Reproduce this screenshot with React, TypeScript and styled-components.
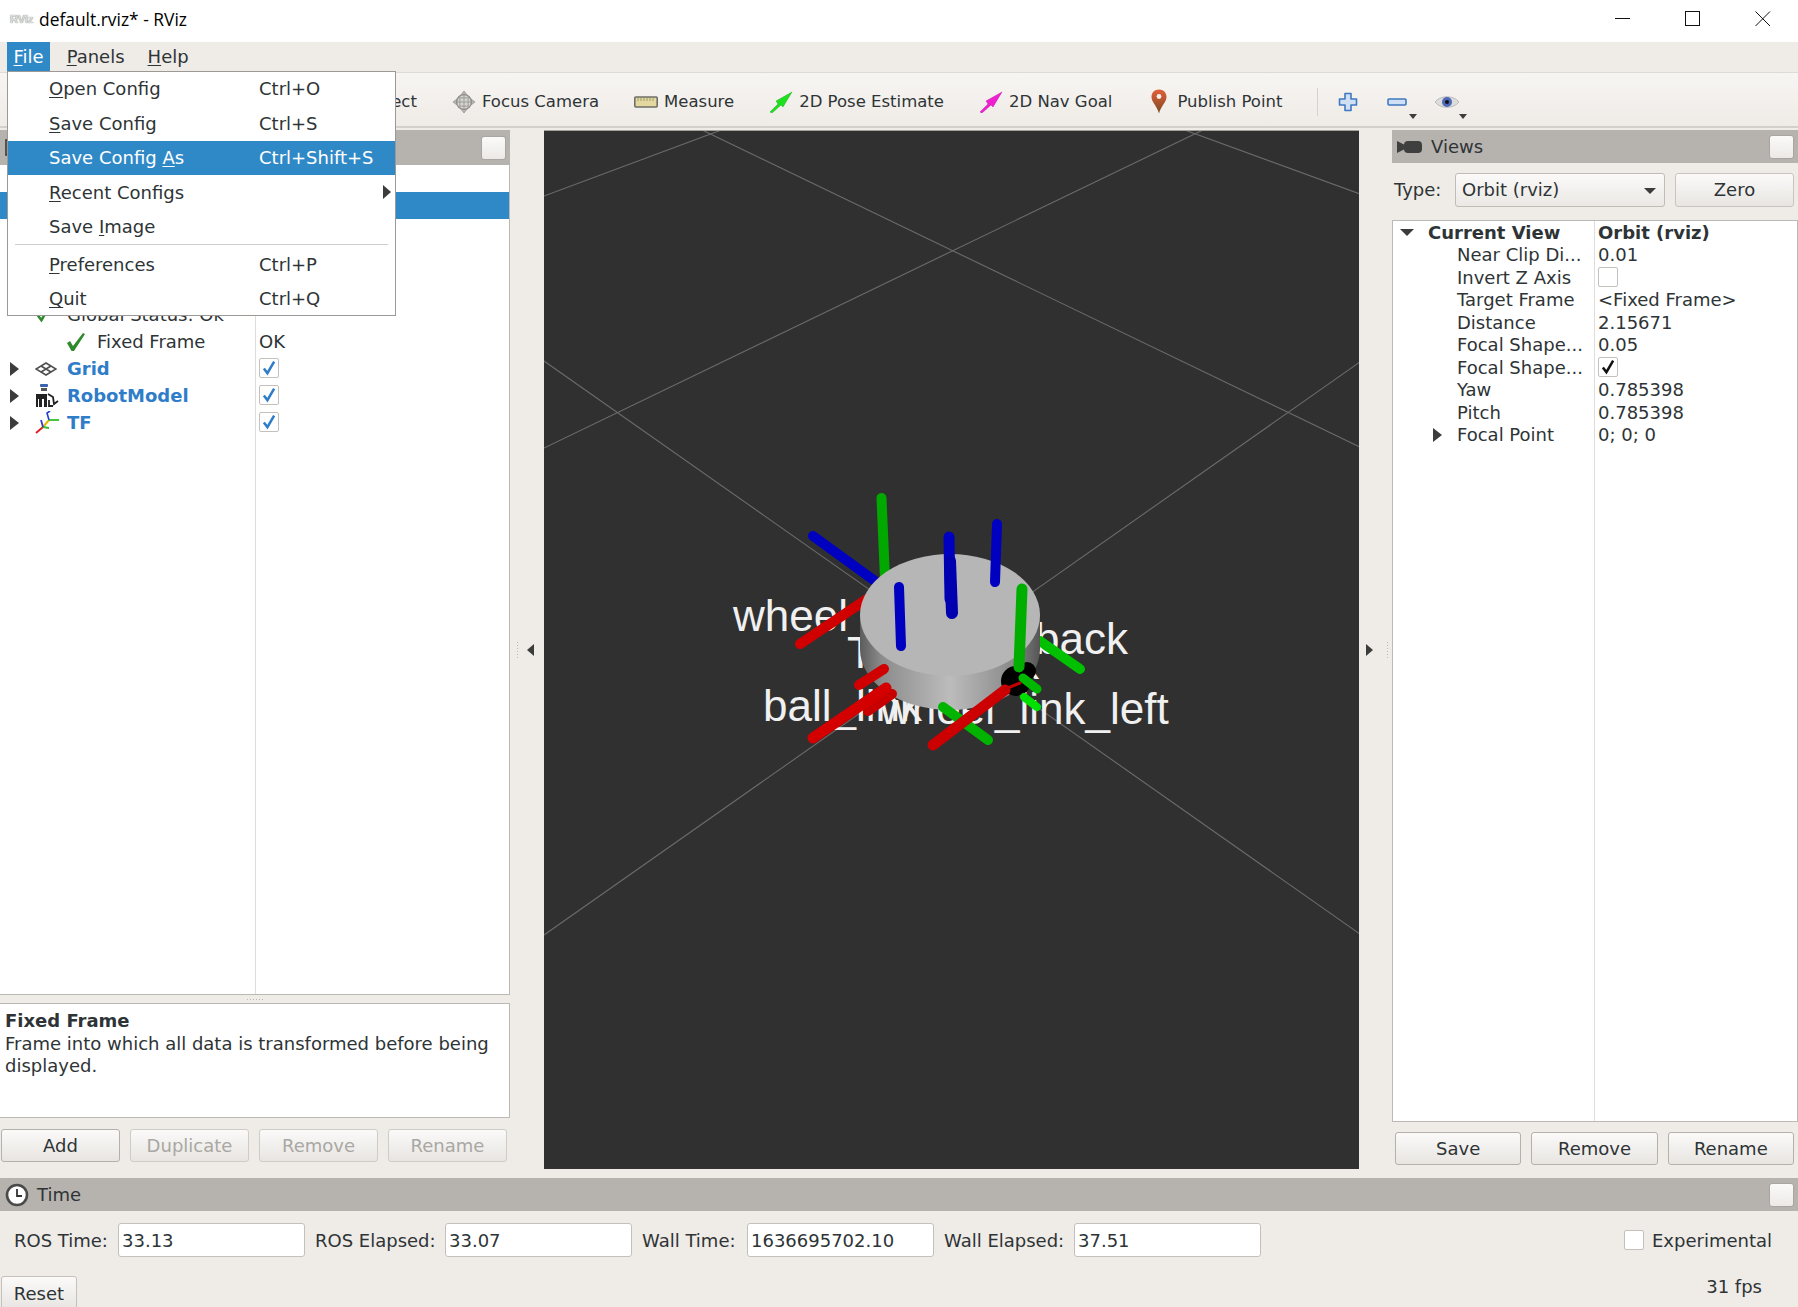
import * as React from 'react';
import styled, { createGlobalStyle } from 'styled-components';

const GlobalStyle = createGlobalStyle`
  html, body {
    margin: 0;
    padding: 0;
    background: #efebe7;
    overflow: hidden;
  }
  * { box-sizing: border-box; }
  u { text-underline-offset: 2px; }
`;

const Layout = styled.div`
  position: relative;
  width: 1798px;
  height: 1307px;
  display: flex;
  flex-direction: column;
  overflow: hidden;
  background: #efebe7;
  color: #2e3436;
  font-family: "DejaVu Sans", "Liberation Sans", sans-serif;
  font-size: 18px;
`;

/* window chrome */
const TitleBar = styled.div`
  height: 42px;
  background: #fff;
  display: flex;
  align-items: center;
  padding: 0 0 4px 10px;
  flex-shrink: 0;
`;

const AppLogo = styled.span`
  width: 29px;
  font: bold 11.5px "Liberation Sans", sans-serif;
  letter-spacing: -0.3px;
  color: #dcdcdc;
  text-shadow: 0 0 1px #666;
`;

const TitleText = styled.span`
  font-family: "Open Sans", sans-serif;
  font-size: 17.4px;
  color: #000;
`;

const WindowButtons = styled.div`
  margin-left: auto;
  display: flex;
  align-items: center;
  gap: 54px;
  padding: 0 27px 0 0;
`;

const MenuBar = styled.div`
  height: 30px;
  flex-shrink: 0;
  display: flex;
  gap: 10px;
  padding-left: 7px;
  background: #efebe7;
`;

const MenuItem = styled.div<{ $open?: boolean }>`
  height: 30px;
  line-height: 30px;
  padding: 0 6.5px;
  background: ${(p) => (p.$open ? '#3089c7' : 'transparent')};
  color: ${(p) => (p.$open ? '#fff' : '#2e3436')};
`;

/* the tools left of Select lie under the open menu, so only their room is kept */
const Toolbar = styled.div`
  height: 56px;
  flex-shrink: 0;
  display: flex;
  align-items: center;
  gap: 35px;
  padding: 4px 0 0 336px;
  font-size: 16.5px;
  background: linear-gradient(#f7f5f2, #efebe7);
  border-top: 1px solid #dedad6;
  border-bottom: 2px solid #d3cfca;
`;

const Tool = styled.div`
  display: flex;
  align-items: center;
  gap: 6px;
`;

const ToolIcon = styled.span`
  width: 24px;
  height: 26px;
  display: flex;
  align-items: center;
  justify-content: center;
`;

const ToolSeparator = styled.div`
  width: 1px;
  height: 28px;
  background: #d6d2cd;
`;

const ViewTools = styled.div`
  display: flex;
  align-items: center;
  margin-left: -15px;
`;

const ViewTool = styled.div<{ $w: number }>`
  position: relative;
  width: ${(p) => p.$w}px;
  height: 26px;
  display: flex;
  align-items: center;
`;

const Caret = styled.span<{ $right: number }>`
  position: absolute;
  right: ${(p) => p.$right}px;
  bottom: -4px;
  width: 0;
  height: 0;
  border-left: 4px solid transparent;
  border-right: 4px solid transparent;
  border-top: 5px solid #3c3c3c;
`;

/* main part */
const Main = styled.div`
  flex: 1;
  min-height: 0;
  display: flex;
`;

const LeftDock = styled.div`
  width: 510px;
  flex-shrink: 0;
  display: flex;
  flex-direction: column;
  padding: 2px 0 16px;
`;

const RightDock = styled.div`
  flex: 1;
  min-width: 0;
  display: flex;
  flex-direction: column;
  padding: 2px 0 13px;
`;

const PanelHeader = styled.div<{ $h?: number }>`
  height: ${(p) => p.$h ?? 33}px;
  flex-shrink: 0;
  background: #b6b2ae;
  display: flex;
  align-items: center;
  gap: 8px;
  padding: 0 4px 0 5px;
  color: #2e3436;
`;

const FloatButton = styled.div`
  margin-left: auto;
  width: 25px;
  height: 24px;
  border-radius: 3px;
  border: 1px solid #a9a5a1;
  background: linear-gradient(#fbfaf9, #ece9e6);
`;

const TreeFrame = styled.div<{ $top?: number }>`
  flex: 1;
  min-height: 0;
  margin-top: ${(p) => p.$top ?? 0}px;
  position: relative;
  background: #fff;
  border: 1px solid #bcb8b4;
  border-top-width: ${(p) => (p.$top ? 1 : 0)}px;
  border-left-width: ${(p) => (p.$top ? 1 : 0)}px;
  overflow: hidden;
`;

const ColumnLine = styled.div<{ $x: number }>`
  position: absolute;
  top: 0;
  bottom: 0;
  left: ${(p) => p.$x}px;
  width: 1px;
  background: #dfdcd9;
`;

const TreeRow = styled.div<{ $h: number; $col: number; $selected?: boolean }>`
  position: relative;
  height: ${(p) => p.$h}px;
  display: grid;
  grid-template-columns: ${(p) => p.$col}px 1fr;
  align-items: center;
  background: ${(p) => (p.$selected ? '#3089c7' : 'transparent')};
  white-space: nowrap;
`;

const NameCell = styled.div<{ $pad: number; $bold?: boolean; $blue?: boolean }>`
  display: flex;
  align-items: center;
  padding-left: ${(p) => p.$pad}px;
  font-weight: ${(p) => (p.$bold || p.$blue ? 700 : 400)};
  color: ${(p) => (p.$blue ? '#2f7dc9' : '#2e3436')};
`;

const Slot = styled.span<{ $w: number }>`
  width: ${(p) => p.$w}px;
  flex-shrink: 0;
  display: flex;
  align-items: center;
`;

const ValueCell = styled.div<{ $bold?: boolean }>`
  padding-left: 4px;
  display: flex;
  align-items: center;
  font-weight: ${(p) => (p.$bold ? 700 : 400)};
`;

const RightArrow = styled.span`
  width: 0;
  height: 0;
  border-top: 7px solid transparent;
  border-bottom: 7px solid transparent;
  border-left: 9px solid #3c3c3c;
`;

const DownArrow = styled.span`
  width: 0;
  height: 0;
  border-left: 7px solid transparent;
  border-right: 7px solid transparent;
  border-top: 7px solid #3c3c3c;
`;

const CheckBox = styled.span`
  width: 20px;
  height: 20px;
  flex-shrink: 0;
  display: flex;
  align-items: center;
  justify-content: center;
  background: #fff;
  border: 1px solid #c4c1bd;
  border-radius: 2px;
`;

const BoxSlot = styled.span`
  margin-top: -2px;
  display: flex;
`;

const SplitterGrip = styled.div`
  height: 8px;
  flex-shrink: 0;
  display: flex;
  align-items: center;
  justify-content: center;
`;

const HorizontalDots = styled.span`
  width: 18px;
  height: 3px;
  background: radial-gradient(circle, #bcb8b4 0.8px, transparent 1px) 0 0 / 3px 3px;
`;

const DescBox = styled.div`
  height: 115px;
  flex-shrink: 0;
  padding: 6px 5px;
  line-height: 22.5px;
  background: #fff;
  border: 1px solid #bcb8b4;
  border-left: 0;
`;

const DescTitle = styled.div`
  font-weight: 700;
`;

const ButtonRow = styled.div<{ $top: number; $left: number }>`
  display: grid;
  grid-template-columns: repeat(${(p) => (p.$left === 1 ? 4 : 3)}, 1fr);
  gap: 10px;
  margin-top: ${(p) => p.$top}px;
  padding: 0 ${(p) => (p.$left === 1 ? 3 : 4)}px 0 ${(p) => p.$left}px;
`;

const Button = styled.div<{ $disabled?: boolean }>`
  height: 33px;
  display: flex;
  align-items: center;
  justify-content: center;
  border-radius: 3px;
  border: 1px solid ${(p) => (p.$disabled ? '#cfccc8' : '#b4b1ac')};
  background: linear-gradient(#fbfaf9, #e8e5e1);
  color: ${(p) => (p.$disabled ? '#a9a7a3' : '#2e3436')};
`;

const Center = styled.div`
  width: 882px;
  flex-shrink: 0;
  display: flex;
  padding: 2px 0 9px;
`;

const Handle = styled.div<{ $w: number; $rev?: boolean }>`
  width: ${(p) => p.$w}px;
  flex-shrink: 0;
  display: flex;
  flex-direction: ${(p) => (p.$rev ? 'row-reverse' : 'row')};
  align-items: center;
  justify-content: space-between;
  padding: ${(p) => (p.$rev ? '0 3px 0 7px' : '0 10px 0 6px')};
`;

const GripDots = styled.span`
  width: 3px;
  height: 18px;
  background: radial-gradient(circle, #bcb8b4 0.8px, transparent 1px) 0 0 / 3px 3px;
`;

const LeftTri = styled.span`
  width: 0;
  height: 0;
  border-top: 6px solid transparent;
  border-bottom: 6px solid transparent;
  border-right: 7px solid #3c3c3c;
`;

const RightTri = styled.span`
  width: 0;
  height: 0;
  border-top: 6px solid transparent;
  border-bottom: 6px solid transparent;
  border-left: 7px solid #3c3c3c;
`;

const Viewport = styled.div`
  width: 815px;
  flex-shrink: 0;
  background: #303030;
  border-top: 1px solid #a5a29e;
  overflow: hidden;
  svg { display: block; }
`;

const TypeRow = styled.div`
  display: flex;
  align-items: center;
  height: 34px;
  margin-top: 10px;
  padding-left: 2px;
`;

const TypeLabel = styled.span`
  width: 61px;
  margin-top: -2px;
`;

const Combo = styled.div`
  width: 210px;
  height: 34px;
  display: flex;
  align-items: center;
  justify-content: space-between;
  padding: 0 8px 2px 6px;
  border-radius: 3px;
  border: 1px solid #c0bdb8;
  background: linear-gradient(#fbfaf9, #ebe8e4);
`;

const ComboArrow = styled.span`
  margin-top: 3px;
  width: 0;
  height: 0;
  border-left: 6px solid transparent;
  border-right: 6px solid transparent;
  border-top: 6px solid #3c3c3c;
`;

const ZeroButton = styled(Button)`
  width: 119px;
  height: 34px;
  margin-left: 10px;
  padding-bottom: 2px;
  border-color: #c8c5c0;
`;

/* time panel */
const TimePanel = styled.div`
  height: 129px;
  flex-shrink: 0;
  display: flex;
  flex-direction: column;
`;

const TimeFields = styled.div`
  display: flex;
  align-items: center;
  margin-top: 12px;
  padding: 0 26px 0 14px;
`;

const FieldLabel = styled.span<{ $w: number }>`
  width: ${(p) => p.$w}px;
  flex-shrink: 0;
`;

const FieldInput = styled.div`
  width: 187px;
  height: 34px;
  margin-right: 10px;
  padding: 0 0 0 3px;
  display: flex;
  align-items: center;
  background: #fff;
  border: 1px solid #c4c1bd;
  border-radius: 3px;
`;

const Experimental = styled.label`
  margin-left: auto;
  display: flex;
  align-items: center;
  gap: 8px;
`;

const TimeFooter = styled.div`
  display: flex;
  align-items: flex-start;
  justify-content: space-between;
  margin-top: 19px;
  padding: 0 36px 0 1px;
`;

const ResetButton = styled(Button)`
  width: 76px;
  height: 34px;
  border-color: #c4c1bd;
`;

/* file menu */
const FileMenu = styled.div`
  position: absolute;
  left: 7px;
  top: 71px;
  width: 389px;
  height: 245px;
  background: #fff;
  border: 1px solid #9b9895;
  z-index: 5;
`;

const FileItem = styled.div<{ $active?: boolean }>`
  position: relative;
  height: 34.5px;
  display: flex;
  align-items: center;
  padding-left: 41px;
  background: ${(p) => (p.$active ? '#3089c7' : 'transparent')};
  color: ${(p) => (p.$active ? '#fff' : '#2e3436')};
  &:first-child { margin-top: -0.5px; }
`;

const ItemLabel = styled.span`
  width: 210px;
`;

const SubArrow = styled.span`
  position: absolute;
  right: 4px;
  top: 10px;
  width: 0;
  height: 0;
  border-top: 7px solid transparent;
  border-bottom: 7px solid transparent;
  border-left: 8px solid #3c3c3c;
`;

const MenuSeparator = styled.div`
  height: 3px;
  margin: 0 7px;
  border-top: 1px solid #cfccc9;
`;

const Tick = ({ color, size = 16 }: { color: string; size?: number }) => (
  <svg width={size} height={size} viewBox="0 0 14 14">
    <path d="M2.5 7.5 L5.6 11.5 L11.5 1.5" fill="none" stroke={color} strokeWidth="2.2" />
  </svg>
);

const GreenCheck = ({ w = 20 }: { w?: number }) => (
  <svg width={w} height="20" viewBox="0 0 20 20">
    <path d="M1 11 L4 9 L7 14 L17 1 L19 2 L8 19 L5.5 19 Z" fill="#2f8a2b" />
  </svg>
);

const GridIcon = () => (
  <svg width="22" height="14" viewBox="0 0 22 14">
    <g fill="none" stroke="#4f4f4f" strokeWidth="1.6">
      <path d="M11 1 L21 7 L11 13 L1 7 Z" />
      <path d="M6 4 L16 10 M16 4 L6 10" />
    </g>
  </svg>
);

const RobotIcon = () => (
  <svg width="24" height="24" viewBox="0 0 24 24">
    <rect x="5" y="0" width="8" height="3" rx="1" fill="#3a62b0" />
    <rect x="6" y="4" width="6" height="3" fill="#555" />
    <path d="M1 10 H12 V23 H9 V15 H7 V23 H4 V15 H3 V23 H1 Z" fill="#222" />
    <path d="M13 10 L18 13 L19 20 L23 17 M14 16 L14 22 H18" fill="none" stroke="#222" strokeWidth="1.8" />
  </svg>
);

const TfIcon = () => (
  <svg width="25" height="23" viewBox="0 0 25 23">
    <path d="M8 16 L14 9" stroke="#e6b800" strokeWidth="2" fill="none" />
    <path d="M14 9 L24 9" stroke="#2fc02f" strokeWidth="1.8" fill="none" />
    <path d="M14 9 L12 2 L15 0" stroke="#2040d0" strokeWidth="1.6" fill="none" />
    <path d="M8 16 L1 22" stroke="#e02020" strokeWidth="2" fill="none" />
    <path d="M8 16 L14 17" stroke="#30c030" strokeWidth="1.8" fill="none" />
    <path d="M8 16 L6 9" stroke="#3040d0" strokeWidth="1.8" fill="none" />
  </svg>
);

const FocusIcon = () => (
  <svg width="26" height="26" viewBox="0 0 26 26">
    <path d="M13 1 L16 5 H10 Z M13 25 L10 21 H16 Z M1 13 L5 10 V16 Z M25 13 L21 16 V10 Z" fill="#b8b6b2" stroke="#8f8d89" strokeWidth="0.7" />
    <circle cx="13" cy="13" r="8" fill="#d5d3cf" stroke="#8f8d89" strokeWidth="1.4" />
    <path d="M13 5 V21 M5 13 H21 M8.5 8 V18 M17.5 8 V18 M8 8.5 H18 M8 17.5 H18" stroke="#8f8d89" strokeWidth="0.8" />
  </svg>
);

const RulerIcon = () => (
  <svg width="24" height="12" viewBox="0 0 24 12">
    <rect x="0.8" y="1" width="22.4" height="10" rx="1" fill="#e3d9a0" stroke="#6f6e68" strokeWidth="1.6" />
    <path d="M4 2 V5 M7 2 V5 M10 2 V5 M13 2 V5 M16 2 V5 M19 2 V5" stroke="#8f8a60" strokeWidth="0.8" />
  </svg>
);

const ArrowIcon = ({ color, edge }: { color: string; edge: string }) => (
  <svg width="24" height="22" viewBox="0 0 24 22">
    <path d="M1 21 L9 13 L7 10 L23 1 L14 16 L12 14 L3 22 Z" fill={color} stroke={edge} strokeWidth="0.4" />
  </svg>
);

const PinIcon = () => (
  <svg width="16" height="25" viewBox="0 0 16 25">
    <defs>
      <linearGradient id="pin" x1="0" y1="0" x2="0" y2="1">
        <stop offset="0" stopColor="#e2603a" />
        <stop offset="1" stopColor="#7c4a22" />
      </linearGradient>
    </defs>
    <path d="M8 0.5 C12.5 0.5 15.5 3.5 15.5 8 C15.5 13 10 17 8 24.5 C6 17 0.5 13 0.5 8 C0.5 3.5 3.5 0.5 8 0.5 Z" fill="url(#pin)" />
    <circle cx="8" cy="7.5" r="2.4" fill="#f4f0ec" />
  </svg>
);

const PlusIcon = () => (
  <svg width="20" height="20" viewBox="0 0 20 20">
    <path d="M7 1.5 H13 V7 H18.5 V13 H13 V18.5 H7 V13 H1.5 V7 H7 Z" fill="#cfe0f5" stroke="#3f78c0" strokeWidth="1.6" strokeLinejoin="round" />
  </svg>
);

const MinusIcon = () => (
  <svg width="20" height="8" viewBox="0 0 20 8">
    <rect x="1" y="1" width="18" height="6" rx="1" fill="#cfe0f5" stroke="#3f78c0" strokeWidth="1.6" />
  </svg>
);

const EyeIcon = () => (
  <svg width="26" height="16" viewBox="0 0 26 16">
    <path d="M1 8 C6 1 20 1 25 8 C20 15 6 15 1 8 Z" fill="#dcdcdc" stroke="#bdbdbd" />
    <circle cx="13" cy="8" r="5" fill="#4f68b8" />
    <circle cx="13" cy="8" r="2" fill="#111" />
  </svg>
);

const CameraIcon = () => (
  <svg width="26" height="14" viewBox="0 0 26 14">
    <path d="M0 1 L8 5 V9 L0 13 Z" fill="#3f3f3f" />
    <rect x="7" y="1" width="18" height="12" rx="4" fill="#3f3f3f" />
  </svg>
);

const ClockIcon = () => (
  <svg width="24" height="24" viewBox="0 0 24 24">
    <circle cx="12" cy="12" r="10" fill="#fff" stroke="#4a4a4a" strokeWidth="2.6" />
    <path d="M12 6 V13 H17" fill="none" stroke="#333" strokeWidth="1.8" />
  </svg>
);

const MonitorIcon = () => (
  <svg width="18" height="18" viewBox="0 0 18 18">
    <rect x="1" y="1" width="16" height="15" fill="#d8c0b8" stroke="#3a3a3a" strokeWidth="1.6" />
  </svg>
);

const Scene = () => (
  <svg width="815" height="1037" viewBox="544 132 815 1037">
    <defs>
      <linearGradient id="side" x1="0" y1="0" x2="1" y2="0">
        <stop offset="0" stopColor="#5c5c5c" />
        <stop offset="0.12" stopColor="#8c8c8c" />
        <stop offset="0.5" stopColor="#bcbcbc" />
        <stop offset="0.85" stopColor="#8a8a8a" />
        <stop offset="1" stopColor="#555" />
      </linearGradient>
    </defs>
    <g stroke="#6b6b6b" strokeWidth="1.1" fill="none">
      <line x1="544" y1="197" x2="724" y2="130" />
      <line x1="700" y1="130" x2="1360" y2="448" />
      <line x1="544" y1="449" x2="1205" y2="130" />
      <line x1="1182" y1="130" x2="1360" y2="195" />
      <line x1="544" y1="362" x2="1360" y2="935" />
      <line x1="1360" y1="363" x2="544" y2="936" />
    </g>
    <g fontFamily="'Liberation Sans', sans-serif" fontSize="44" fill="#f0f0f0">
      <text x="733" y="632">wheel</text>
      <text x="1035" y="655">back</text>
      <text x="847" y="669">T</text>
      <text x="1017" y="680">k</text>
      <text x="763" y="722">ball_link</text>
      <text x="880" y="725">wheel_link_left</text>
    </g>
    <g fill="none" strokeLinecap="round">
      <line x1="800" y1="645" x2="870" y2="598" stroke="#d00000" strokeWidth="10" />
      <line x1="813" y1="537" x2="875" y2="582" stroke="#0000c0" strokeWidth="10" />
      <line x1="881.5" y1="499" x2="885" y2="580" stroke="#00a800" strokeWidth="10" />
      <line x1="1040" y1="642" x2="1080" y2="670" stroke="#00c000" strokeWidth="10" />
    </g>
    <path d="M860 616 V650 A90 61 0 0 0 1040 650 V616 Z" fill="url(#side)" />
    <ellipse cx="950" cy="616" rx="90" ry="61" fill="#b6b6b6" />
    <circle cx="1016" cy="682" r="15" fill="#000" />
    <circle cx="1027" cy="672" r="9" fill="#000" />
    <g fill="none" strokeLinecap="round">
      <line x1="949" y1="538" x2="950" y2="600" stroke="#0000c0" strokeWidth="11" />
      <line x1="950" y1="562" x2="952" y2="614" stroke="#0000b0" strokeWidth="12" />
      <line x1="997" y1="525" x2="995" y2="583" stroke="#0000c0" strokeWidth="10" />
      <line x1="899" y1="588" x2="901" y2="647" stroke="#0000c0" strokeWidth="10" />
      <line x1="892" y1="695" x2="868" y2="712" stroke="#c80000" strokeWidth="10" />
      <line x1="859" y1="686" x2="884" y2="670" stroke="#d00000" strokeWidth="10" />
      <line x1="813" y1="739" x2="886" y2="689" stroke="#d40000" strokeWidth="11" />
    </g>
    <g fill="none" strokeLinecap="round">
      <line x1="1022" y1="590" x2="1019" y2="668" stroke="#00ae00" strokeWidth="11" />
      <line x1="1023" y1="679" x2="1037" y2="690" stroke="#00b800" strokeWidth="9" />
      <line x1="1024" y1="698" x2="1037" y2="708" stroke="#00e000" strokeWidth="8" />
      <line x1="943" y1="708" x2="988" y2="741" stroke="#00b400" strokeWidth="10" />
      <line x1="933" y1="746" x2="1005" y2="691" stroke="#cc0000" strokeWidth="11" />
      <line x1="1005" y1="690" x2="1020" y2="684" stroke="#c00000" strokeWidth="3" />
    </g>
  </svg>
);

const COL_LEFT = 255;
const COL_RIGHT = 201;

const App = () => (
  <Layout>
    <GlobalStyle />
    <TitleBar>
      <AppLogo>RViz</AppLogo>
      <TitleText>default.rviz* - RViz</TitleText>
      <WindowButtons>
        <svg width="16" height="16" viewBox="0 0 16 16"><line x1="0" y1="7.5" x2="15" y2="7.5" stroke="#111" /></svg>
        <svg width="16" height="16" viewBox="0 0 16 16"><rect x="0.5" y="0.5" width="14" height="14" fill="none" stroke="#111" /></svg>
        <svg width="16" height="16" viewBox="0 0 16 16"><path d="M0.5 0.5 L15 15 M15 0.5 L0.5 15" stroke="#111" /></svg>
      </WindowButtons>
    </TitleBar>
    <MenuBar>
      <MenuItem $open><u>F</u>ile</MenuItem>
      <MenuItem><u>P</u>anels</MenuItem>
      <MenuItem><u>H</u>elp</MenuItem>
    </MenuBar>
    <Toolbar>
      <Tool><ToolIcon />Select</Tool>
      <Tool><ToolIcon><FocusIcon /></ToolIcon>Focus Camera</Tool>
      <Tool><ToolIcon><RulerIcon /></ToolIcon>Measure</Tool>
      <Tool><ToolIcon><ArrowIcon color="#1fe01f" edge="#12a012" /></ToolIcon>2D Pose Estimate</Tool>
      <Tool><ToolIcon><ArrowIcon color="#f01fd0" edge="#b010a0" /></ToolIcon>2D Nav Goal</Tool>
      <Tool><ToolIcon><PinIcon /></ToolIcon>Publish Point</Tool>
      <ToolSeparator />
      <ViewTools>
        <ViewTool $w={49}><PlusIcon /></ViewTool>
        <ViewTool $w={47}><MinusIcon /><Caret $right={17} /></ViewTool>
        <ViewTool $w={45}><EyeIcon /><Caret $right={12} /></ViewTool>
      </ViewTools>
    </Toolbar>
    <Main>
      <LeftDock>
        <PanelHeader $h={35}>
          <MonitorIcon />
          <FloatButton />
        </PanelHeader>
        <TreeFrame>
          <ColumnLine $x={COL_LEFT} />
          <TreeRow $h={27} $col={COL_LEFT} />
          <TreeRow $h={27} $col={COL_LEFT} $selected />
          <TreeRow $h={82} $col={COL_LEFT} />
          <TreeRow $h={27} $col={COL_LEFT}>
            <NameCell $pad={35}><Slot $w={32}><Tick color="#2f8a2b" /></Slot>Global Status: Ok</NameCell>
          </TreeRow>
          <TreeRow $h={27} $col={COL_LEFT}>
            <NameCell $pad={66}><Slot $w={31}><GreenCheck /></Slot>Fixed Frame</NameCell>
            <ValueCell>OK</ValueCell>
          </TreeRow>
          <TreeRow $h={27} $col={COL_LEFT}>
            <NameCell $pad={10} $blue><Slot $w={25}><RightArrow /></Slot><Slot $w={32}><GridIcon /></Slot>Grid</NameCell>
            <ValueCell><BoxSlot><CheckBox><Tick color="#2f7dc9" /></CheckBox></BoxSlot></ValueCell>
          </TreeRow>
          <TreeRow $h={27} $col={COL_LEFT}>
            <NameCell $pad={10} $blue><Slot $w={25}><RightArrow /></Slot><Slot $w={32}><RobotIcon /></Slot>RobotModel</NameCell>
            <ValueCell><BoxSlot><CheckBox><Tick color="#2f7dc9" /></CheckBox></BoxSlot></ValueCell>
          </TreeRow>
          <TreeRow $h={27} $col={COL_LEFT}>
            <NameCell $pad={10} $blue><Slot $w={25}><RightArrow /></Slot><Slot $w={32}><TfIcon /></Slot>TF</NameCell>
            <ValueCell><BoxSlot><CheckBox><Tick color="#2f7dc9" /></CheckBox></BoxSlot></ValueCell>
          </TreeRow>
        </TreeFrame>
        <SplitterGrip><HorizontalDots /></SplitterGrip>
        <DescBox>
          <DescTitle>Fixed Frame</DescTitle>
          Frame into which all data is transformed before being displayed.
        </DescBox>
        <ButtonRow $top={11} $left={1}>
          <Button>Add</Button>
          <Button $disabled>Duplicate</Button>
          <Button $disabled>Remove</Button>
          <Button $disabled>Rename</Button>
        </ButtonRow>
      </LeftDock>
      <Center>
        <Handle $w={34}><GripDots /><LeftTri /></Handle>
        <Viewport><Scene /></Viewport>
        <Handle $w={33} $rev><GripDots /><RightTri /></Handle>
      </Center>
      <RightDock>
        <PanelHeader>
          <CameraIcon />
          <span>Views</span>
          <FloatButton />
        </PanelHeader>
        <TypeRow>
          <TypeLabel>Type:</TypeLabel>
          <Combo>Orbit (rviz)<ComboArrow /></Combo>
          <ZeroButton>Zero</ZeroButton>
        </TypeRow>
        <TreeFrame $top={13}>
          <ColumnLine $x={COL_RIGHT} />
          <TreeRow $h={22.5} $col={COL_RIGHT}>
            <NameCell $pad={7} $bold><Slot $w={28}><DownArrow /></Slot>Current View</NameCell>
            <ValueCell $bold>Orbit (rviz)</ValueCell>
          </TreeRow>
          <TreeRow $h={22.5} $col={COL_RIGHT}><NameCell $pad={64}>Near Clip Di...</NameCell><ValueCell>0.01</ValueCell></TreeRow>
          <TreeRow $h={22.5} $col={COL_RIGHT}><NameCell $pad={64}>Invert Z Axis</NameCell><ValueCell><CheckBox /></ValueCell></TreeRow>
          <TreeRow $h={22.5} $col={COL_RIGHT}><NameCell $pad={64}>Target Frame</NameCell><ValueCell>&lt;Fixed Frame&gt;</ValueCell></TreeRow>
          <TreeRow $h={22.5} $col={COL_RIGHT}><NameCell $pad={64}>Distance</NameCell><ValueCell>2.15671</ValueCell></TreeRow>
          <TreeRow $h={22.5} $col={COL_RIGHT}><NameCell $pad={64}>Focal Shape...</NameCell><ValueCell>0.05</ValueCell></TreeRow>
          <TreeRow $h={22.5} $col={COL_RIGHT}><NameCell $pad={64}>Focal Shape...</NameCell><ValueCell><CheckBox><Tick color="#111" /></CheckBox></ValueCell></TreeRow>
          <TreeRow $h={22.5} $col={COL_RIGHT}><NameCell $pad={64}>Yaw</NameCell><ValueCell>0.785398</ValueCell></TreeRow>
          <TreeRow $h={22.5} $col={COL_RIGHT}><NameCell $pad={64}>Pitch</NameCell><ValueCell>0.785398</ValueCell></TreeRow>
          <TreeRow $h={22.5} $col={COL_RIGHT}>
            <NameCell $pad={40}><Slot $w={24}><RightArrow /></Slot>Focal Point</NameCell>
            <ValueCell>0; 0; 0</ValueCell>
          </TreeRow>
        </TreeFrame>
        <ButtonRow $top={10} $left={3}>
          <Button>Save</Button>
          <Button>Remove</Button>
          <Button>Rename</Button>
        </ButtonRow>
      </RightDock>
    </Main>
    <TimePanel>
      <PanelHeader>
        <ClockIcon />
        <span>Time</span>
        <FloatButton />
      </PanelHeader>
      <TimeFields>
        <FieldLabel $w={104}>ROS Time:</FieldLabel>
        <FieldInput>33.13</FieldInput>
        <FieldLabel $w={130}>ROS Elapsed:</FieldLabel>
        <FieldInput>33.07</FieldInput>
        <FieldLabel $w={105}>Wall Time:</FieldLabel>
        <FieldInput>1636695702.10</FieldInput>
        <FieldLabel $w={130}>Wall Elapsed:</FieldLabel>
        <FieldInput>37.51</FieldInput>
        <Experimental><CheckBox />Experimental</Experimental>
      </TimeFields>
      <TimeFooter>
        <ResetButton>Reset</ResetButton>
        <span>31 fps</span>
      </TimeFooter>
    </TimePanel>
    <FileMenu>
      <FileItem><ItemLabel><u>O</u>pen Config</ItemLabel>Ctrl+O</FileItem>
      <FileItem><ItemLabel><u>S</u>ave Config</ItemLabel>Ctrl+S</FileItem>
      <FileItem $active><ItemLabel>Save Config <u>A</u>s</ItemLabel>Ctrl+Shift+S</FileItem>
      <FileItem><ItemLabel><u>R</u>ecent Configs</ItemLabel><SubArrow /></FileItem>
      <FileItem><ItemLabel>Save <u>I</u>mage</ItemLabel></FileItem>
      <MenuSeparator />
      <FileItem><ItemLabel><u>P</u>references</ItemLabel>Ctrl+P</FileItem>
      <FileItem><ItemLabel><u>Q</u>uit</ItemLabel>Ctrl+Q</FileItem>
    </FileMenu>
  </Layout>
);

export default App;
